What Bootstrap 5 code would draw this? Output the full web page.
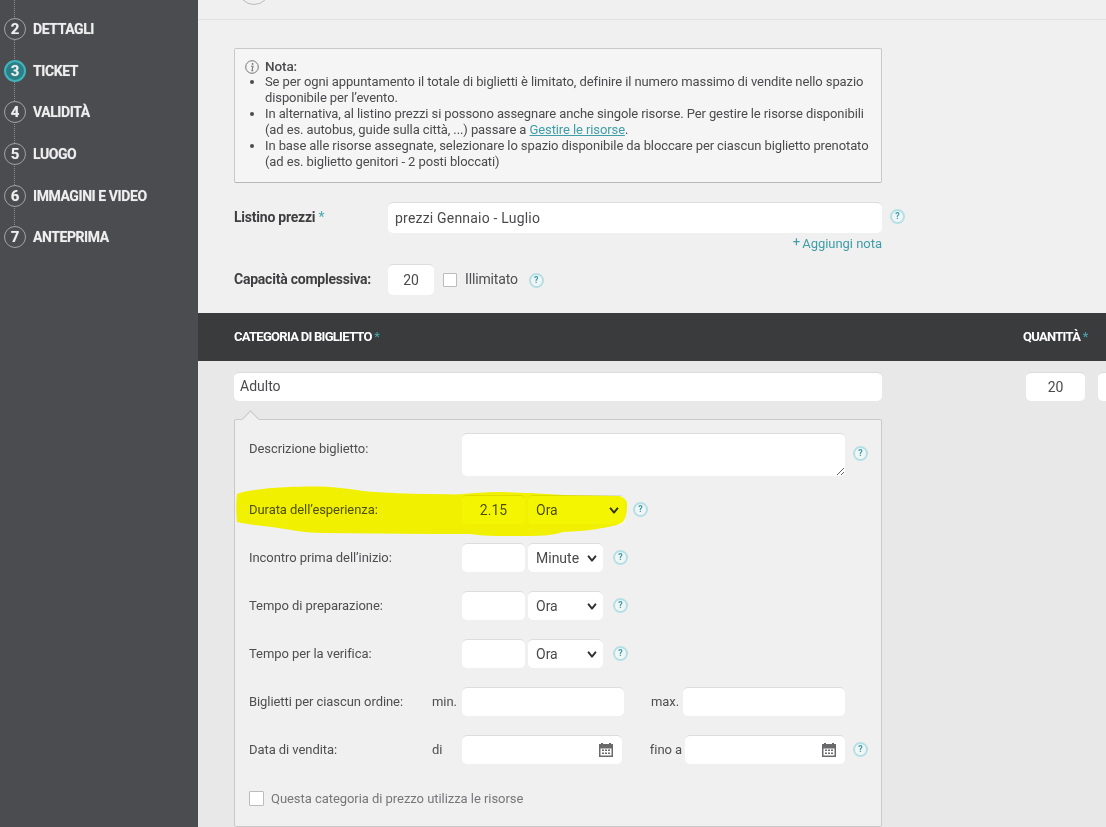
<!DOCTYPE html>
<html lang="it">
<head>
<meta charset="utf-8">
<title>Ticket</title>
<link href="https://cdn.jsdelivr.net/npm/bootstrap@5.3.0/dist/css/bootstrap.min.css" rel="stylesheet">
<style>
html,body{height:827px;overflow:hidden}
body{font-family:Roboto,"Liberation Sans",sans-serif;font-size:13px;color:#4a4a4c;background:#f0f0f1}
.shell{height:827px}
.side{width:198px;background:#4b4c4f;position:relative;overflow:hidden}
.side::before{content:"";position:absolute;left:14px;top:0;bottom:590px;border-left:1px dotted #8c8d90}
.stepper{padding-top:18px;gap:19.7px;position:relative}
.stepline{height:22px;padding-left:4px;gap:7px;color:#eee;font-weight:700;font-size:14px;letter-spacing:-.42px;line-height:22px;text-shadow:0 0 1px rgba(255,255,255,.45)}
.stepnum{width:22px;height:22px;border-radius:50%;border:1px solid #a2a3a5;background:#4b4c4f;font-size:15px;color:#eee;flex:none;text-align:center;line-height:21px;letter-spacing:0}
.stepnow .stepnum{background:#2b7f86;border:2px solid #3fb4bc;line-height:18px}
.mainpane{min-width:0;overflow:hidden;position:relative}
.topstrip{height:20px;border-bottom:1px solid #e2e2e3;padding-left:40px;overflow:hidden}
.topcirc{width:32px;height:32px;border:1px solid #bbb;border-radius:50%;margin-top:-27px;background:#f0f0f1}
.notebox{width:648px;height:135px;margin:28px 0 0 36px;border:1px solid #c9c9ca;border-bottom-color:#b5b5b6;border-radius:2px;background:#f5f5f6;padding:9px 6px 9px 10px;line-height:16px;color:#4b4b4d;font-size:13px;letter-spacing:-.1px}
.notebox ul{margin:0;padding-left:20px}
.notebox a{color:#3f9da6}
.notehead{font-weight:500;font-size:13.5px}
.infoic{width:14px;height:14px;flex:none;margin-right:6px;margin-top:2px}
.formtop{padding-left:36px}
.labw{width:154px;font-weight:700;color:#3f3f41;font-size:14px;letter-spacing:-.23px}
.req{color:#49aab2;font-weight:400}
.fieldx.form-control,.fieldx.form-select{border:0;border-top:1px solid #ddd;border-radius:5px;font-size:14px;color:#4a4a4c;background-color:#fff;height:29px;min-height:0;padding:0 6px;box-shadow:none;font-family:Roboto,sans-serif;flex:none}
.fieldx.form-select{padding:0 22px 0 8px;background-position:right 4px center;background-size:14px 11px;background-image:url("data:image/svg+xml,%3csvg xmlns='http://www.w3.org/2000/svg' viewBox='0 0 16 16'%3e%3cpath fill='none' stroke='%23333' stroke-linecap='round' stroke-linejoin='round' stroke-width='3' d='m3 5 5 6 5-6'/%3e%3c/svg%3e")}
.row1{height:31px;margin-top:19px}
.in494.form-control{width:494px;height:31px;font-size:14px;letter-spacing:.2px;padding-left:7px}
.helpic{width:15px;height:15px;border-radius:50%;border:2px solid #b5dfe3;color:#3f9da6;font-size:9px;font-weight:700;line-height:11px;text-align:center;flex:none;display:inline-block;background:#f0f6f7}
.helplist{margin-left:8px;margin-top:-2px}
.addnote{width:648px;text-align:right;color:#3f9da6;line-height:16px;height:16px;margin-top:3px;font-size:13px;letter-spacing:-.03px}
.plusup{position:relative;top:-2px;margin-right:-1px}
.capacity{height:31px;margin-top:12px}
.in46.form-control{width:46px;height:31px;text-align:center;padding:0}
.boxy{width:14px;height:14px;border:1px solid #bbb;background:#fff;flex:none;border-radius:1px;margin:0 8px 0 9px!important}
.illim{font-size:14px;color:#4f4f51;letter-spacing:-.15px}
.helpcap{margin-left:11px;margin-top:2px}
.darkbar{height:48px;background:#3a3b3d;margin-top:18px;padding-left:36px;color:#fff;font-weight:700;font-size:13px;letter-spacing:-.72px}
.catcol{width:789px;flex:none}
.lower{background:#e8e8e9;height:466px;padding:11px 0 0 36px;position:relative}
.adultorow{height:29px}
.in648.form-control{width:648px;padding:0 0 3px 6px}
.in60.form-control{width:59px;text-align:center;padding:0 0 1px;margin-left:144px}
.in40.form-control{width:60px;margin-left:13px}
.panel{width:648px;height:408px;margin-top:18px;background:#f0f0f1;border:1px solid #c9c9ca;border-radius:2px;padding:13px 0 0 14px;position:relative;gap:19px}
.panel::before{content:"";position:absolute;left:9px;top:-7px;width:13px;height:13px;background:#f0f0f1;border-left:1px solid #c9c9ca;border-top:1px solid #c9c9ca;transform:rotate(45deg)}
.rowp{height:29px;font-size:13px;color:#4f4f51;letter-spacing:-.07px}
.rowtall{height:43px}
.lab214{width:213px;flex:none}
.labdesc{padding-top:6px}
.lab183{width:183px;flex:none}
.lab30{width:30px;flex:none}
.area.form-control{width:383px;height:43px;resize:both;border-radius:5px}
.in63.form-control{width:63px;padding:0;text-align:center}
.selbig.form-select{width:97px;margin-left:3px}
.selsm.form-select{width:75px;margin-left:3px}
.in162.form-control{width:162px}
.lab58{width:59px;flex:none;text-align:right;padding-right:4px}
.labfino{width:63px;flex:none;text-align:right;padding-right:3px}
.datewrap{position:relative;width:160px;flex:none}
.datewrap .form-control{width:100%}
.calic{position:absolute;right:9px;top:8px;width:14px;height:14px}
.gaphelp{margin-left:8px}
.gapsm{margin-left:10px}
.helpdesc{margin-top:13px}
.pcheck{margin-top:8px;color:#77777a;font-size:13px;letter-spacing:-.05px;height:15px;line-height:13px}
.pcheck .boxy{margin:0 7px 0 0!important;width:15px;height:15px}
.glow{position:absolute;left:0;top:0;pointer-events:none;mix-blend-mode:darken}
</style>
</head>
<body>
<div class="shell d-flex">
  <aside class="side flex-shrink-0">
    <div class="stepper d-flex flex-column">
      <div class="stepline d-flex"><span class="stepnum">2</span><span>DETTAGLI</span></div>
      <div class="stepline stepnow d-flex"><span class="stepnum">3</span><span>TICKET</span></div>
      <div class="stepline d-flex"><span class="stepnum">4</span><span>VALIDITÀ</span></div>
      <div class="stepline d-flex"><span class="stepnum">5</span><span>LUOGO</span></div>
      <div class="stepline d-flex"><span class="stepnum">6</span><span>IMMAGINI E VIDEO</span></div>
      <div class="stepline d-flex"><span class="stepnum">7</span><span>ANTEPRIMA</span></div>
    </div>
  </aside>
  <main class="mainpane flex-grow-1">
    <div class="topstrip"><div class="topcirc"></div></div>
    <div class="notebox">
      <div class="d-flex"><svg class="infoic" viewBox="0 0 14 14"><circle cx="7" cy="7" r="6.3" fill="none" stroke="#77777a"/><circle cx="7.6" cy="3.9" r=".9" fill="#77777a"/><path d="M6 6.2h2L7 10.6h1.2" fill="none" stroke="#77777a" stroke-width="1.1"/></svg><span class="notehead">Nota:</span></div>
      <ul>
        <li>Se per ogni appuntamento il totale di biglietti è limitato, definire il numero massimo di vendite nello spazio disponibile per l’evento.</li>
        <li>In alternativa, al listino prezzi si possono assegnare anche singole risorse. Per gestire le risorse disponibili (ad es. autobus, guide sulla città, ...) passare a <a href="#">Gestire le risorse</a>.</li>
        <li>In base alle risorse assegnate, selezionare lo spazio disponibile da bloccare per ciascun biglietto prenotato (ad es. biglietto genitori - 2 posti bloccati)</li>
      </ul>
    </div>
    <div class="formtop">
      <div class="row1 d-flex align-items-center">
        <div class="labw">Listino prezzi <span class="req">*</span></div>
        <input class="form-control fieldx in494" value="prezzi Gennaio - Luglio">
        <span class="helpic helplist">?</span>
      </div>
      <div class="addnote"><span class="plusup">+</span> Aggiungi nota</div>
      <div class="capacity d-flex align-items-center">
        <div class="labw">Capacità complessiva:</div>
        <input class="form-control fieldx in46" value="20">
        <span class="boxy"></span>
        <span class="illim">Illimitato</span>
        <span class="helpic helpcap">?</span>
      </div>
    </div>
    <div class="darkbar d-flex align-items-center">
      <div class="catcol"><span>CATEGORIA DI BIGLIETTO</span> <span class="req">*</span></div>
      <div class="qtycol"><span>QUANTITÀ</span> <span class="req">*</span></div>
    </div>
    <div class="lower">
      <div class="adultorow d-flex">
        <input class="form-control fieldx in648" value="Adulto">
        <input class="form-control fieldx in60" value="20">
        <input class="form-control fieldx in40" value="">
      </div>
      <div class="panel d-flex flex-column">
        <div class="rowp rowtall d-flex"><span class="lab214 labdesc">Descrizione biglietto:</span><textarea class="form-control fieldx area"></textarea><span class="helpic gaphelp helpdesc">?</span></div>
        <div class="rowp d-flex align-items-center"><span class="lab214">Durata dell’esperienza:</span><input class="form-control fieldx in63" value="2.15"><select class="form-select fieldx selbig"><option>Ora</option></select><span class="helpic gaphelp">?</span></div>
        <div class="rowp d-flex align-items-center"><span class="lab214">Incontro prima dell’inizio:</span><input class="form-control fieldx in63"><select class="form-select fieldx selsm"><option>Minute</option></select><span class="helpic gapsm">?</span></div>
        <div class="rowp d-flex align-items-center"><span class="lab214">Tempo di preparazione:</span><input class="form-control fieldx in63"><select class="form-select fieldx selsm"><option>Ora</option></select><span class="helpic gapsm">?</span></div>
        <div class="rowp d-flex align-items-center"><span class="lab214">Tempo per la verifica:</span><input class="form-control fieldx in63"><select class="form-select fieldx selsm"><option>Ora</option></select><span class="helpic gapsm">?</span></div>
        <div class="rowp d-flex align-items-center"><span class="lab183">Biglietti per ciascun ordine:</span><span class="lab30">min.</span><input class="form-control fieldx in162"><span class="lab58">max.</span><input class="form-control fieldx in162"></div>
        <div class="rowp d-flex align-items-center"><span class="lab183">Data di vendita:</span><span class="lab30">di</span>
          <div class="datewrap"><input class="form-control fieldx"><svg class="calic" viewBox="0 0 14 14"><path fill="#6a6a6c" fill-rule="evenodd" d="M0 1h2V0h2v1h6V0h2v1h2v13H0zM1.5 5.5v7h11v-7z"/><path fill="#6a6a6c" d="M3 6.5h2V8H3zM6 6.5h2V8H6zM9 6.5h2V8H9zM3 9.5h2V11H3zM6 9.5h2V11H6zM9 9.5h2V11H9z"/></svg></div>
          <span class="labfino">fino a</span>
          <div class="datewrap"><input class="form-control fieldx"><svg class="calic" viewBox="0 0 14 14"><path fill="#6a6a6c" fill-rule="evenodd" d="M0 1h2V0h2v1h6V0h2v1h2v13H0zM1.5 5.5v7h11v-7z"/><path fill="#6a6a6c" d="M3 6.5h2V8H3zM6 6.5h2V8H6zM9 6.5h2V8H9zM3 9.5h2V11H3zM6 9.5h2V11H6zM9 9.5h2V11H9z"/></svg></div>
          <span class="helpic gaphelp">?</span></div>
        <div class="pcheck d-flex align-items-center"><span class="boxy"></span><span>Questa categoria di prezzo utilizza le risorse</span></div>
      </div>
    </div>
    <svg class="glow" width="908" height="827" viewBox="198 0 908 827"><path fill="#f4f500" d="M237 494C245 491 255 490 263 489C280 487 310 486 330 487C345 488 355 490 363 491C385 493 410 494 430 494C445 494 455 495 463 494C475 493 485 492 497 492C510 492 520 493 530 493L563 495L620 496C624 498 627 500 627 504C627 512 626 518 623 522C617 526 607 527 597 529C585 531 575 531 563 532C553 535 542 536 530 536L497 536C488 536 478 535 470 534L430 534L323 533C315 533 305 532 297 531C285 529 275 527 263 526C255 525 245 524 237 522C236 512 236 503 237 494Z"/></svg>
  </main>
</div>
</body>
</html>
